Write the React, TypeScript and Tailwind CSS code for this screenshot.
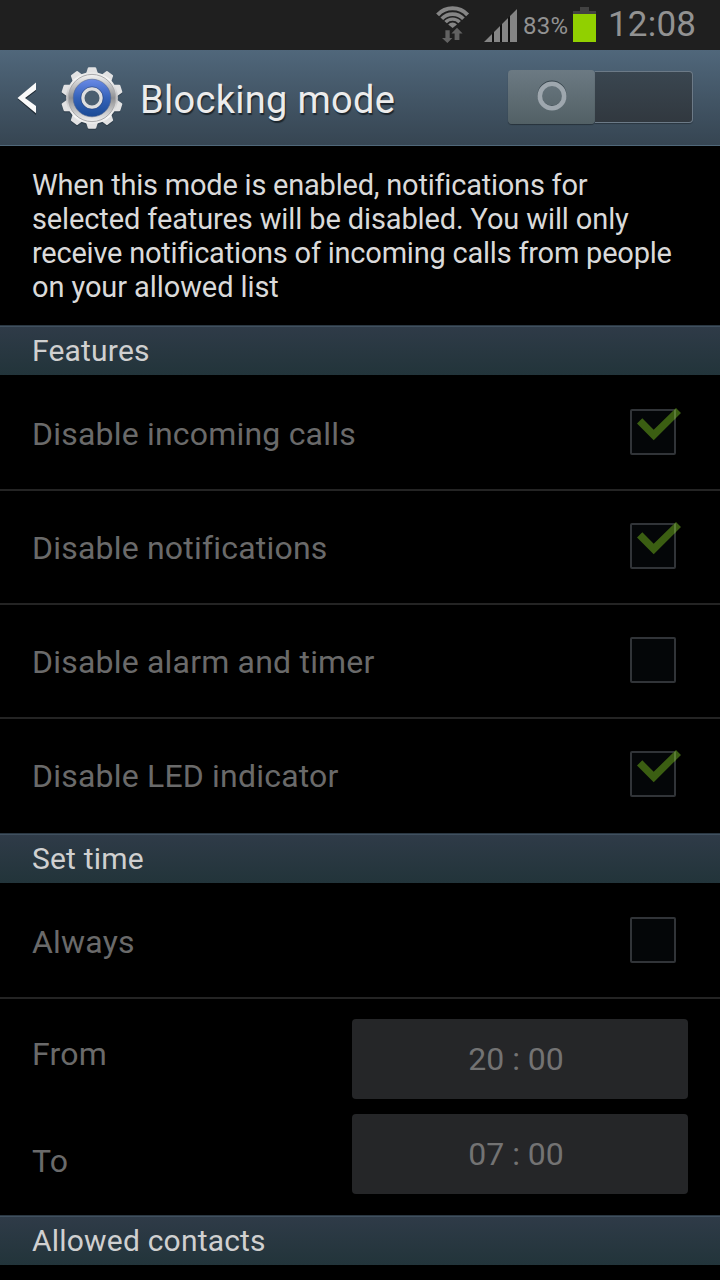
import { useState } from 'react';

interface Feature {
  label: string;
  checked: boolean;
}

const initialFeatures: Feature[] = [
  { label: 'Disable incoming calls', checked: true },
  { label: 'Disable notifications', checked: true },
  { label: 'Disable alarm and timer', checked: false },
  { label: 'Disable LED indicator', checked: true },
];

const teeth = [0, 36, 72, 108, 144, 180, 216, 252, 288, 324];

function WifiIcon() {
  return (
    <svg width="36" height="38" viewBox="0 0 36 38" className="shrink-0">
      <g fill="none" stroke="#858585">
        <path d="M1.6 8.9A20.4 20.4 0 0 1 31.6 8.9" strokeWidth="4" />
        <path d="M5.8 12.8A14.8 14.8 0 0 1 27.4 12.8" strokeWidth="3.7" />
        <path d="M9.6 16.2A9.6 9.6 0 0 1 23.6 16.2" strokeWidth="3.4" />
      </g>
      <path d="M16.6 22L12.2 18.4A6 6 0 0 1 21 18.4Z" fill="#858585" />
      <path d="M9.4 24.3H13.7V32H16.4L11.4 37L6 32H9.4Z" fill="#626262" />
      <path d="M21 21.8L26.6 27.4H23.4V34H18.6V27.4H15.4Z" fill="#626262" />
    </svg>
  );
}

function SignalIcon() {
  return (
    <svg width="34" height="34" viewBox="0 0 34 34" className="shrink-0">
      <path d="M0 33L33 0V33Z" fill="#111111" />
      <path d="M0 33L8 25V33Z" fill="#858585" />
      <path d="M10 33V23L16 17V33Z" fill="#858585" />
      <path d="M18 33V15L24 9V33Z" fill="#858585" />
      <path d="M26 33V7L33 0V33Z" fill="#858585" />
    </svg>
  );
}

function BatteryIcon() {
  return (
    <svg width="23" height="35" viewBox="0 0 23 35" className="shrink-0">
      <path d="M7 0H16V4H23V35H0V4H7Z" fill="#424242" />
      <rect y="7" width="23" height="28" fill="#91d000" />
    </svg>
  );
}

function GearIcon() {
  return (
    <svg width="64" height="66" viewBox="-32 -32 64 66" className="shrink-0">
      <defs>
        <linearGradient id="metal" x1="0" y1="-31" x2="0" y2="31" gradientUnits="userSpaceOnUse">
          <stop offset="0" stopColor="#dcdcdc" />
          <stop offset="0.2" stopColor="#f5f5f5" />
          <stop offset="0.5" stopColor="#bdbdbf" />
          <stop offset="0.8" stopColor="#f8f8f8" />
          <stop offset="1" stopColor="#dedede" />
        </linearGradient>
        <linearGradient id="rim" x1="0" y1="0" x2="0" y2="1">
          <stop offset="0" stopColor="#f4f4f4" />
          <stop offset="0.5" stopColor="#8f9093" />
          <stop offset="1" stopColor="#f0f0f0" />
        </linearGradient>
        <linearGradient id="blue" x1="0" y1="0" x2="0" y2="1">
          <stop offset="0" stopColor="#6a8ae6" />
          <stop offset="0.5" stopColor="#3462b9" />
          <stop offset="1" stopColor="#1a4a94" />
        </linearGradient>
      </defs>
      <g fill="#26333f" opacity="0.5" transform="translate(0 1.5)">
        {teeth.map(angle => (
          <path key={angle} d="M-6 -23L-3.8 -30.6H3.8L6 -23Z" transform={`rotate(${angle})`} />
        ))}
        <circle r="26" />
      </g>
      <g fill="url(#metal)">
        {teeth.map(angle => (
          <path
            key={angle}
            d="M-6.4 -23L-4.2 -30Q-3.9 -30.8 -3.1 -30.8H3.1Q3.9 -30.8 4.2 -30L6.4 -23Z"
            fill="#e2e2e3"
            transform={`rotate(${angle})`}
          />
        ))}
        <circle r="26" />
      </g>
      <circle r="23.6" fill="url(#rim)" stroke="#a9a9ab" strokeWidth="1" />
      <circle r="18.8" fill="url(#blue)" stroke="#50648f" strokeWidth="0.6" />
      <circle r="9.2" fill="#4a5e70" stroke="#dededf" strokeWidth="3.4" />
      <circle r="11.2" fill="none" stroke="#243f78" strokeWidth="0.6" />
    </svg>
  );
}

function StatusBar() {
  return (
    <div className="flex h-[50px] items-start justify-end bg-[#1f1f1f] pr-6 text-[#929292]">
      <div className="mt-1.5 mr-3">
        <WifiIcon />
      </div>
      <div className="mt-[9px] mr-[5px]">
        <SignalIcon />
      </div>
      <span className="mt-[9px] w-[50px] text-[24px] leading-[34px] tracking-[0.2px] whitespace-nowrap">
        83%
      </span>
      <div className="mt-[7px] mr-3">
        <BatteryIcon />
      </div>
      <span className="w-[88px] text-[35px] leading-[50px] tracking-[0.2px] whitespace-nowrap">
        12:08
      </span>
    </div>
  );
}

function Switch({ on, onToggle }: { on: boolean; onToggle: () => void }) {
  return (
    <button
      onClick={onToggle}
      className={`mb-0.5 flex h-[54px] w-[185px] items-center ${on ? 'flex-row-reverse' : ''}`}
    >
      <span className="flex h-[54px] w-[87px] items-center justify-center rounded-[4px] bg-linear-to-b from-[#6c7a83] to-[#526065] shadow-[0_1px_1px_rgba(0,0,0,0.35)]">
        <svg width="32" height="32" viewBox="0 0 32 32" className="mb-0.5">
          <circle cx="16" cy="15" r="12.5" fill="none" stroke="#36434b" strokeWidth="4" />
          <circle cx="16" cy="16" r="12.2" fill="none" stroke="#9ea7ae" strokeWidth="4.6" />
        </svg>
      </span>
      <span className="h-[52px] w-[98px] rounded-r-[4px] border border-l-0 border-[#6c7a87] bg-linear-to-b from-[#3a4650] to-[#31383f] shadow-[0_1px_1px_rgba(0,0,0,0.3)]" />
    </button>
  );
}

function CheckBox({ checked }: { checked: boolean }) {
  return (
    <svg width="52" height="50" viewBox="0 0 52 50" className="shrink-0">
      <rect x="1" y="3" width="44" height="44" rx="1" fill="#040608" stroke="#313438" strokeWidth="2" />
      {checked && <path d="M7 16.5L12.3 11.3L23.7 22.8L46 0.9L51 5.9L23.7 33.2Z" fill="#3b5e12" />}
      {checked && <path d="M44 2.9L46 2V10.9L44 12.9Z" fill="#5b7c37" />}
    </svg>
  );
}

function SectionHeader({ title }: { title: string }) {
  return (
    <h2 className="h-[50px] border-t border-[#2a3742] bg-linear-to-b from-[#2f3b48] to-[#22343a] pl-8 text-[30px] leading-[50px] tracking-[0.2px] text-[#d0d0d0] shadow-[inset_0_1px_0_#40505f]">
      {title}
    </h2>
  );
}

function CheckRow({ label, checked, last, onClick }: Feature & { last?: boolean; onClick: () => void }) {
  return (
    <button
      onClick={onClick}
      className={`flex h-[114px] w-full items-center justify-between border-b-2 pr-[38px] pb-0.5 pl-8 text-left ${
        last ? 'border-transparent' : 'border-[#242424]'
      }`}
    >
      <span className="mt-1 text-[32px] leading-[38px] tracking-[0.2px] text-[#6a6a6a]">{label}</span>
      <CheckBox checked={checked} />
    </button>
  );
}

function TimeButton({ value }: { value: string }) {
  return (
    <button className="h-20 w-[336px] rounded-[4px] bg-[#252628] pr-2 text-[32px] text-[#737373]">
      {value}
    </button>
  );
}

export default function App() {
  const [enabled, setEnabled] = useState(false);
  const [features, setFeatures] = useState(initialFeatures);
  const [always, setAlways] = useState(false);

  const toggleFeature = (index: number) => {
    setFeatures(features.map((f, i) => (i === index ? { ...f, checked: !f.checked } : f)));
  };

  return (
    <div className="h-[1280px] w-[720px] overflow-hidden bg-black font-['Roboto',sans-serif]">
      <StatusBar />

      <header className="flex h-24 items-center border-b border-[#50687a] bg-linear-to-b from-[#50677b] to-[#364552] pr-[27px] pl-[17px]">
        <svg width="20" height="34" viewBox="0 0 20 34" className="shrink-0">
          <path d="M19 3V10L8.6 18L19 26.5V34L0.5 18Z" fill="#202c36" />
          <path d="M19 1.5V8.8L8 17L19 25V32.3L0.5 17Z" fill="#fafafa" />
        </svg>
        <div className="mt-0.5 ml-[23px]">
          <GearIcon />
        </div>
        <h1 className="mt-1 ml-4 flex-1 text-[38px] leading-[46px] tracking-[0.3px] whitespace-nowrap text-[#ececec] [text-shadow:1px_2px_1px_#1c262e]">
          Blocking mode
        </h1>
        <Switch on={enabled} onToggle={() => setEnabled(!enabled)} />
      </header>

      <p className="h-[179px] px-8 pt-[22px] text-[29px] leading-[34px] text-[#dadada]">
        <span className="tracking-[-0.22px]">When this mode is enabled, notifications for</span>
        <br />
        <span className="tracking-[-0.12px]">selected features will be disabled. You will only</span>
        <br />
        <span className="tracking-[-0.22px]">receive notifications of incoming calls from people</span>
        <br />
        <span className="tracking-[-0.09px]">on your allowed list</span>
      </p>

      <SectionHeader title="Features" />
      <div className="h-[458px] pt-0.5">
        {features.map((feature, i) => (
          <CheckRow
            key={feature.label}
            {...feature}
            last={i === features.length - 1}
            onClick={() => toggleFeature(i)}
          />
        ))}
      </div>

      <SectionHeader title="Set time" />
      <div className="pt-0.5">
        <CheckRow label="Always" checked={always} onClick={() => setAlways(!always)} />
      </div>
      <div className="flex h-[216px] justify-between px-8 pt-5">
        <div className="flex flex-col gap-[37px] text-[32px] leading-[70px] tracking-[0.22px] text-[#6a6a6a]">
          <span>From</span>
          <span>To</span>
        </div>
        <div className="flex flex-col gap-[15px]">
          <TimeButton value="20 : 00" />
          <TimeButton value="07 : 00" />
        </div>
      </div>

      <SectionHeader title="Allowed contacts" />
    </div>
  );
}
